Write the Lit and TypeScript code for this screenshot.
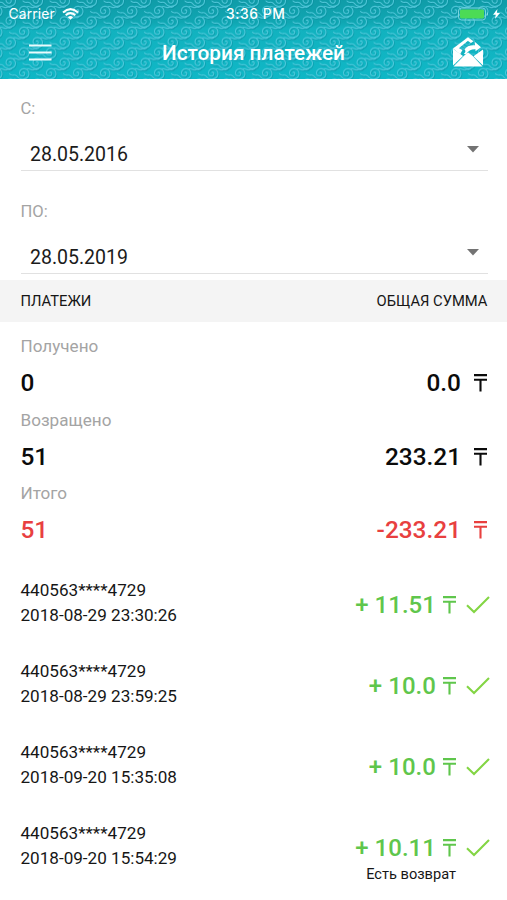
import { LitElement, html, css, svg } from "lit";
import { customElement, property } from "lit/decorators.js";

interface Payment {
  card: string;
  date: string;
  amount: string;
  note?: string;
}

const totals = [
  { label: "Получено", count: "0", sum: "0.0", negative: false },
  { label: "Возращено", count: "51", sum: "233.21", negative: false },
  { label: "Итого", count: "51", sum: "-233.21", negative: true },
];

const payments: Payment[] = [
  { card: "440563****4729", date: "2018-08-29 23:30:26", amount: "+ 11.51" },
  { card: "440563****4729", date: "2018-08-29 23:59:25", amount: "+ 10.0" },
  { card: "440563****4729", date: "2018-09-20 15:35:08", amount: "+ 10.0" },
  { card: "440563****4729", date: "2018-09-20 15:54:29", amount: "+ 10.11", note: "Есть возврат" },
];

const swirl =
  "M-14 0C-12 3-9 0-7 2C-5 5-2 6 1 5C6 4 7-2 3-4.5C0-6-4-4.5-4-1C-4 2-1 3 .5 1.5C2 0 1-2-.5-1.5M3-4.5C6-6 8-3 10-4C12-5 13-3 15-5";

const spots = [-1, 0, 1, 2].flatMap((row) =>
  [-1, 0, 1].map((col) => ({ x: 10 + col * 27 + (row % 2 ? 13.5 : 0), y: 1 + row * 10.4 })),
);

@customElement("header-pattern")
export class HeaderPattern extends LitElement {
  static styles = css`
    :host { display: block; height: 79px; }
    svg { display: block; width: 100%; height: 79px; }
  `;
  render() {
    return html`<svg>
      <defs>
        <linearGradient id="bg" x1="0" y1="0" x2="0" y2="1">
          <stop offset="0" stop-color="#109ca8"></stop>
          <stop offset=".28" stop-color="#0fa6b2"></stop>
          <stop offset=".36" stop-color="#12b2bf"></stop>
          <stop offset="1" stop-color="#0fb7c6"></stop>
        </linearGradient>
        <pattern id="waves" width="27" height="20.8" patternUnits="userSpaceOnUse">
          ${spots.map(
            (p) => svg`<g transform="translate(${p.x} ${p.y})" fill="none" stroke-linecap="round">
              <path d=${swirl} transform="translate(.8 1.1)" stroke="#078a9b" stroke-opacity=".55" stroke-width="1"></path>
              <path d=${swirl} stroke="#5fcfe4" stroke-opacity=".8" stroke-width="1.05"></path>
            </g>`,
          )}
        </pattern>
      </defs>
      <rect width="100%" height="100%" fill="url(#bg)"></rect>
      <rect width="100%" height="100%" fill="url(#waves)"></rect>
    </svg>`;
  }
}

@customElement("date-field")
export class DateField extends LitElement {
  @property() label = "";
  @property() value = "";
  static styles = css`
    :host { display: block; height: 103px; }
    .label { height: 41px; font-size: 16.6px; line-height: 20px; color: #a4a4a4; }
    .box {
      box-sizing: border-box; height: 31px; padding: 0 9.5px; display: flex;
      justify-content: space-between; border-bottom: 1px solid #e1e1e1;
      font-size: 19.5px; line-height: 30px; color: #1b1b1b;
    }
    svg { width: 12px; height: 7px; margin-top: 6px; }
  `;
  render() {
    return html`<div class="label">${this.label}</div>
      <div class="box">
        <span>${this.value}</span>
        <svg viewBox="0 0 12 7"><path d="M0 0H12L6 6.5Z" fill="#737373"></path></svg>
      </div>`;
  }
}

@customElement("app-root")
export class AppRoot extends LitElement {
  static styles = css`
    :host {
      display: block; height: 900px; overflow: hidden; background: #fff;
      font-family: Roboto, "Noto Sans", sans-serif; color: #161616;
    }
    header { display: grid; grid-template-rows: 79px; height: 79px; color: #fff; }
    header > * { grid-area: 1 / 1; min-width: 0; }
    .bars { display: grid; grid-template-rows: 27px 52px; }
    .status, .nav { display: grid; grid-template-columns: 1fr auto 1fr; align-items: center; }
    .status { padding: 0 6px 0 8.5px; font-family: Inter, sans-serif; font-size: 13.8px; letter-spacing: .15px; }
    .carrier { display: flex; align-items: center; gap: 7px; }
    .time { font-weight: 500; letter-spacing: .6px; padding-left: 2px; }
    .power { display: flex; justify-content: flex-end; align-items: center; }
    .nav { padding: 0 22px 0 29px; }
    .nav h1 { margin: -1px 0 0 -7px; font-size: 20.8px; font-weight: 500; line-height: 26px; }
    .menu { margin-top: -2px; }
    .mail { justify-self: end; margin-top: -2px; }
    svg { display: block; }
    .dates { padding: 20px 19px 0 20.5px; height: 201px; box-sizing: border-box; }
    .heading {
      display: flex; justify-content: space-between; height: 42px; padding: 0 19.5px 0 20.5px;
      background: #f4f4f4; font-size: 14.75px; line-height: 43px;
    }
    .totals { padding: 13px 20px 0 20.5px; }
    .total { height: 73.6px; }
    .label { font-size: 17.1px; line-height: 22px; color: #a4a4a4; }
    .values {
      display: flex; justify-content: space-between; font-size: 24.4px; font-weight: 500;
      line-height: 30px; padding-top: 11px; color: #0b0b0b;
    }
    .negative { color: #e8403f; }
    .sum { display: flex; gap: 13px; }
    .tenge { width: 13px; height: 18px; margin-top: 6px; }
    .payments { padding: 22px 17px 0 20.5px; }
    .payment { display: flex; justify-content: space-between; height: 81px; }
    .info { font-size: 17.1px; line-height: 25.6px; }
    .result { display: grid; grid-template-columns: auto 24px; column-gap: 10px; align-content: start; padding-top: 12px; }
    .amount {
      display: flex; justify-content: flex-end; gap: 7px; color: #5fc64c; font-size: 24px;
      font-weight: 500; line-height: 30px; letter-spacing: .05px;
    }
    .check { margin-top: 6px; }
    .note { font-size: 14.6px; line-height: 20px; text-align: right; margin-top: 1px; }
  `;

  private tenge() {
    return html`<svg class="tenge" viewBox="0 0 13 18">
      <path d="M0 1.1H13M0 5.8H13M6.5 5.8V17.6" fill="none" stroke="currentColor" stroke-width="2.1"></path>
    </svg>`;
  }

  render() {
    return html`
      <header>
        <header-pattern></header-pattern>
        <div class="bars">
          <div class="status">
            <div class="carrier">
              <span>Carrier</span>
              <svg width="17" height="12" viewBox="0 0 17 12" fill="none" stroke="#fff" stroke-width="2">
                <path d="M1 4.5Q8.5-2.3 16 4.5M3.7 7.3Q8.5 3 13.3 7.3"></path>
                <path d="M8.5 11.8L5.9 9.2Q8.5 7 11.1 9.2Z" fill="#fff" stroke="none"></path>
              </svg>
            </div>
            <span class="time">3:36 PM</span>
            <div class="power">
              <svg width="43" height="14" viewBox="0 0 43 14">
                <rect x=".5" y="1" width="27" height="12" rx="3" fill="none" stroke="#7bd6df"></rect>
                <rect x="2" y="2.5" width="24" height="9" rx="1.5" fill="#4cdb55"></rect>
                <path d="M29 5Q31 7 29 9Z" fill="#8cdde4"></path>
                <path d="M39.5 2L35 7.8H37.8L36.9 12L42 6.1H38.8Z" fill="#fff"></path>
              </svg>
            </div>
          </div>
          <div class="nav">
            <svg class="menu" width="23" height="17" viewBox="0 0 23 17">
              <path d="M0 1.5H22.5M0 8.5H22.5M0 15.5H22.5" stroke="#e8fbfd" stroke-width="2.1"></path>
            </svg>
            <h1>История платежей</h1>
            <svg class="mail" width="33" height="31" viewBox="0 0 33 31">
              <path d="M1 11.5L16 .3L21.5 4.2L19 6L16 3.8L6.8 11.2L10.5 13L8 17.2Z" fill="#fff"></path>
              <path d="M11.8 17Q14.5 14.5 12.6 12.5Q15 7.8 23 8.2V5L29 10.2L23.5 14.2V12.2Q17 12 14.2 17.3Z" fill="#fff"></path>
              <path d="M1 11.8L11 19L1 28.5ZM31 12.5V28.5L21.5 19.2Z" fill="#fff"></path>
              <path d="M1.5 29.6L12 18.8L16 15.6L20.5 18.8L30.5 29.6Z" fill="#fff"></path>
            </svg>
          </div>
        </div>
      </header>
      <section class="dates">
        <date-field label="С:" value="28.05.2016"></date-field>
        <date-field label="ПО:" value="28.05.2019"></date-field>
      </section>
      <div class="heading"><span>ПЛАТЕЖИ</span><span>ОБЩАЯ СУММА</span></div>
      <section class="totals">
        ${totals.map(
          (t) => html`<div class="total">
            <div class="label">${t.label}</div>
            <div class="values ${t.negative ? "negative" : ""}">
              <span>${t.count}</span>
              <span class="sum">${t.sum}${this.tenge()}</span>
            </div>
          </div>`,
        )}
      </section>
      <section class="payments">
        ${payments.map(
          (p) => html`<div class="payment">
            <div class="info"><div>${p.card}</div><div>${p.date}</div></div>
            <div class="result">
              <div class="amount"><span>${p.amount}</span>${this.tenge()}</div>
              <svg class="check" width="24" height="18" viewBox="0 0 24 18">
                <path d="M1 9.2L8 16L23 1" fill="none" stroke="#83d544" stroke-width="2.1"></path>
              </svg>
              ${p.note ? html`<div class="note">${p.note}</div>` : ""}
            </div>
          </div>`,
        )}
      </section>
    `;
  }
}
